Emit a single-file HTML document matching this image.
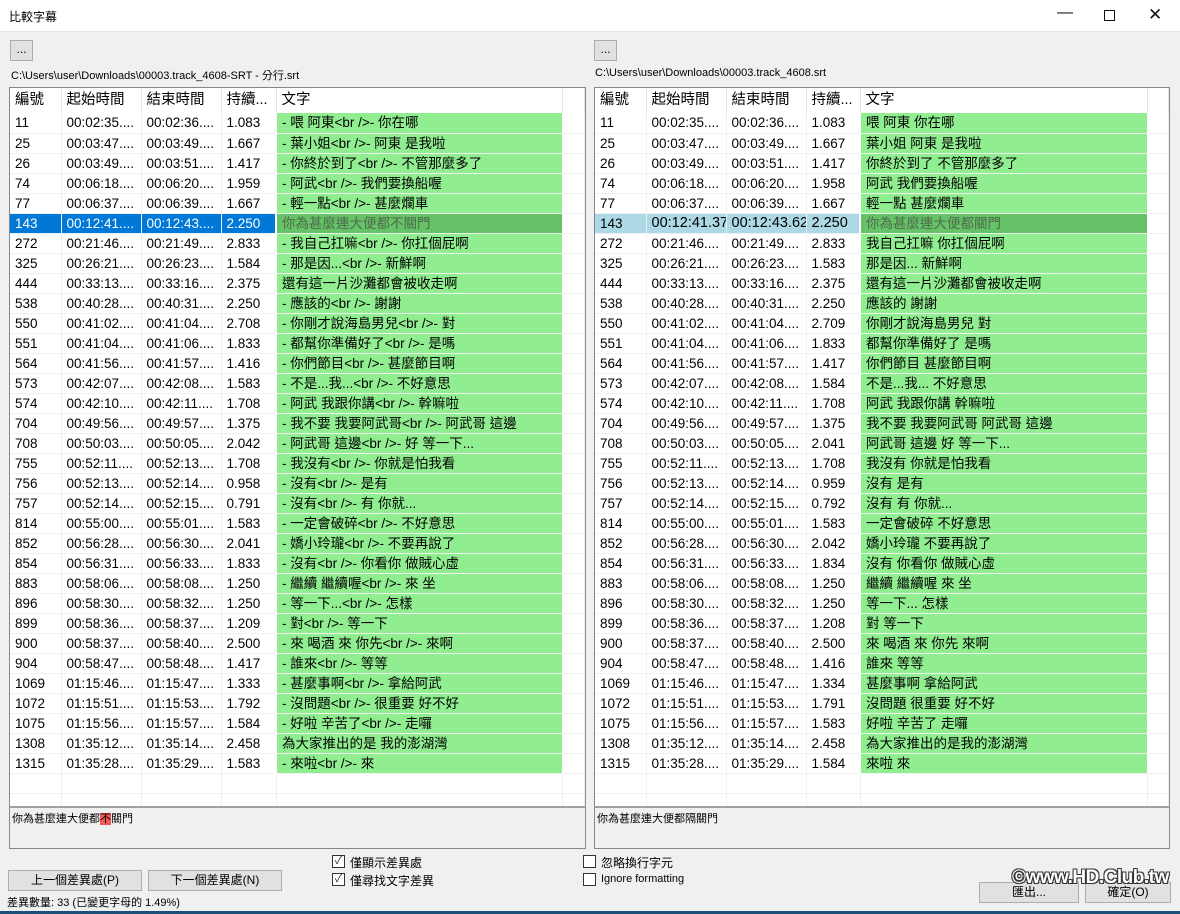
<!DOCTYPE html>
<html><head><meta charset="utf-8">
<style>
*{box-sizing:border-box;margin:0;padding:0}
body{width:1180px;height:914px;background:#f0f0f0;font-family:"Liberation Sans","Noto Sans CJK TC",sans-serif;font-size:12px;color:#000;position:relative;overflow:hidden}
.title{position:absolute;left:0;top:0;width:1180px;height:32px;background:#fff;border-bottom:1px solid #e5e5e5}
.title span{position:absolute;left:9px;top:8px;font-size:12px}
.wb{position:absolute;top:8px;font-size:16px;color:#111}
.abs{position:absolute}
.btn{position:absolute;background:#e1e1e1;border:1px solid #adadad;text-align:center;font-size:12px}
.grid{position:absolute;background:#fff;border:1px solid #828790;overflow:hidden}
table{border-collapse:collapse;table-layout:fixed;font-size:13.5px}
td,th{height:20px;padding:0 0 0 5px;white-space:nowrap;overflow:hidden;text-overflow:clip;border-right:1px solid #f0f0f0;border-bottom:1px solid #f0f0f0;font-weight:normal;text-align:left;line-height:19px}
th{height:25px;font-size:14.5px;border-right:1px solid #e5e5e5;border-bottom:none}
td.g{background:#90ee90;border-right:1px solid #fff;border-left:2px solid #fff}
tr.s td{background:#0078d7;color:#fff}
tr.s td.g{background:#66c266;color:#4d6a4d}
tr.r td{background:#add8e6;color:#000}
tr.r td.g{background:#66c266;color:#4d6a4d}
.panel{position:absolute;background:#f0f0f0;border:1px solid #828790;border-top:2px solid #a0a0a0;font-size:11px;padding:2px 2px}
.cb{position:absolute;width:13px;height:13px;border:1px solid #333;background:#fff;font-size:11px;line-height:11px;text-align:center;color:#333}
.lab{position:absolute;font-size:12px}
</style></head><body>
<div class="title"><span>比較字幕</span>
<div class="wb" style="left:1057px;top:4px">&#8212;</div>
<div class="abs" style="left:1104px;top:10px;width:11px;height:11px;border:1px solid #111"></div>
<div class="wb" style="left:1148px;top:5px;font-size:17px">&#10005;</div>
</div>

<div class="btn" style="left:10px;top:40px;width:23px;height:21px;line-height:17px">...</div>
<div class="lab" style="left:11px;top:67px;font-size:11px">C:\Users\user\Downloads\00003.track_4608-SRT - 分行.srt</div>
<div class="btn" style="left:594px;top:40px;width:23px;height:21px;line-height:17px">...</div>
<div class="lab" style="left:595px;top:67px;font-size:11px">C:\Users\user\Downloads\00003.track_4608.srt</div>

<div class="grid" style="left:9px;top:87px;width:577px;height:720px">
<table style="width:575px"><colgroup><col style="width:51px"><col style="width:80px"><col style="width:80px"><col style="width:55px"><col style="width:286px"><col></colgroup>
<tr><th>編號</th><th>起始時間</th><th>結束時間</th><th>持續...</th><th>文字</th><th></th></tr>
<tr><td>11</td><td>00:02:35....</td><td>00:02:36....</td><td>1.083</td><td class="g">- 喂 阿東&lt;br /&gt;- 你在哪</td><td></td></tr>
<tr><td>25</td><td>00:03:47....</td><td>00:03:49....</td><td>1.667</td><td class="g">- 葉小姐&lt;br /&gt;- 阿東 是我啦</td><td></td></tr>
<tr><td>26</td><td>00:03:49....</td><td>00:03:51....</td><td>1.417</td><td class="g">- 你終於到了&lt;br /&gt;- 不管那麼多了</td><td></td></tr>
<tr><td>74</td><td>00:06:18....</td><td>00:06:20....</td><td>1.959</td><td class="g">- 阿武&lt;br /&gt;- 我們要換船喔</td><td></td></tr>
<tr><td>77</td><td>00:06:37....</td><td>00:06:39....</td><td>1.667</td><td class="g">- 輕一點&lt;br /&gt;- 甚麼爛車</td><td></td></tr>
<tr class="s"><td>143</td><td>00:12:41....</td><td>00:12:43....</td><td>2.250</td><td class="g">你為甚麼連大便都不關門</td><td style="background:#fff"></td></tr>
<tr><td>272</td><td>00:21:46....</td><td>00:21:49....</td><td>2.833</td><td class="g">- 我自己扛嘛&lt;br /&gt;- 你扛個屁啊</td><td></td></tr>
<tr><td>325</td><td>00:26:21....</td><td>00:26:23....</td><td>1.584</td><td class="g">- 那是因...&lt;br /&gt;- 新鮮啊</td><td></td></tr>
<tr><td>444</td><td>00:33:13....</td><td>00:33:16....</td><td>2.375</td><td class="g">還有這一片沙灘都會被收走啊</td><td></td></tr>
<tr><td>538</td><td>00:40:28....</td><td>00:40:31....</td><td>2.250</td><td class="g">- 應該的&lt;br /&gt;- 謝謝</td><td></td></tr>
<tr><td>550</td><td>00:41:02....</td><td>00:41:04....</td><td>2.708</td><td class="g">- 你剛才說海島男兒&lt;br /&gt;- 對</td><td></td></tr>
<tr><td>551</td><td>00:41:04....</td><td>00:41:06....</td><td>1.833</td><td class="g">- 都幫你準備好了&lt;br /&gt;- 是嗎</td><td></td></tr>
<tr><td>564</td><td>00:41:56....</td><td>00:41:57....</td><td>1.416</td><td class="g">- 你們節目&lt;br /&gt;- 甚麼節目啊</td><td></td></tr>
<tr><td>573</td><td>00:42:07....</td><td>00:42:08....</td><td>1.583</td><td class="g">- 不是...我...&lt;br /&gt;- 不好意思</td><td></td></tr>
<tr><td>574</td><td>00:42:10....</td><td>00:42:11....</td><td>1.708</td><td class="g">- 阿武 我跟你講&lt;br /&gt;- 幹嘛啦</td><td></td></tr>
<tr><td>704</td><td>00:49:56....</td><td>00:49:57....</td><td>1.375</td><td class="g">- 我不要 我要阿武哥&lt;br /&gt;- 阿武哥 這邊</td><td></td></tr>
<tr><td>708</td><td>00:50:03....</td><td>00:50:05....</td><td>2.042</td><td class="g">- 阿武哥 這邊&lt;br /&gt;- 好 等一下...</td><td></td></tr>
<tr><td>755</td><td>00:52:11....</td><td>00:52:13....</td><td>1.708</td><td class="g">- 我沒有&lt;br /&gt;- 你就是怕我看</td><td></td></tr>
<tr><td>756</td><td>00:52:13....</td><td>00:52:14....</td><td>0.958</td><td class="g">- 沒有&lt;br /&gt;- 是有</td><td></td></tr>
<tr><td>757</td><td>00:52:14....</td><td>00:52:15....</td><td>0.791</td><td class="g">- 沒有&lt;br /&gt;- 有 你就...</td><td></td></tr>
<tr><td>814</td><td>00:55:00....</td><td>00:55:01....</td><td>1.583</td><td class="g">- 一定會破碎&lt;br /&gt;- 不好意思</td><td></td></tr>
<tr><td>852</td><td>00:56:28....</td><td>00:56:30....</td><td>2.041</td><td class="g">- 嬌小玲瓏&lt;br /&gt;- 不要再說了</td><td></td></tr>
<tr><td>854</td><td>00:56:31....</td><td>00:56:33....</td><td>1.833</td><td class="g">- 沒有&lt;br /&gt;- 你看你 做賊心虛</td><td></td></tr>
<tr><td>883</td><td>00:58:06....</td><td>00:58:08....</td><td>1.250</td><td class="g">- 繼續 繼續喔&lt;br /&gt;- 來 坐</td><td></td></tr>
<tr><td>896</td><td>00:58:30....</td><td>00:58:32....</td><td>1.250</td><td class="g">- 等一下...&lt;br /&gt;- 怎樣</td><td></td></tr>
<tr><td>899</td><td>00:58:36....</td><td>00:58:37....</td><td>1.209</td><td class="g">- 對&lt;br /&gt;- 等一下</td><td></td></tr>
<tr><td>900</td><td>00:58:37....</td><td>00:58:40....</td><td>2.500</td><td class="g">- 來 喝酒 來 你先&lt;br /&gt;- 來啊</td><td></td></tr>
<tr><td>904</td><td>00:58:47....</td><td>00:58:48....</td><td>1.417</td><td class="g">- 誰來&lt;br /&gt;- 等等</td><td></td></tr>
<tr><td>1069</td><td>01:15:46....</td><td>01:15:47....</td><td>1.333</td><td class="g">- 甚麼事啊&lt;br /&gt;- 拿給阿武</td><td></td></tr>
<tr><td>1072</td><td>01:15:51....</td><td>01:15:53....</td><td>1.792</td><td class="g">- 沒問題&lt;br /&gt;- 很重要 好不好</td><td></td></tr>
<tr><td>1075</td><td>01:15:56....</td><td>01:15:57....</td><td>1.584</td><td class="g">- 好啦 辛苦了&lt;br /&gt;- 走囉</td><td></td></tr>
<tr><td>1308</td><td>01:35:12....</td><td>01:35:14....</td><td>2.458</td><td class="g">為大家推出的是 我的澎湖灣</td><td></td></tr>
<tr><td>1315</td><td>01:35:28....</td><td>01:35:29....</td><td>1.583</td><td class="g">- 來啦&lt;br /&gt;- 來</td><td></td></tr>
<tr><td></td><td></td><td></td><td></td><td></td><td></td></tr>
<tr><td></td><td></td><td></td><td></td><td></td><td></td></tr>
</table></div>

<div class="grid" style="left:594px;top:87px;width:576px;height:720px">
<table style="width:574px"><colgroup><col style="width:51px"><col style="width:80px"><col style="width:80px"><col style="width:54px"><col style="width:287px"><col></colgroup>
<tr><th>編號</th><th>起始時間</th><th>結束時間</th><th>持續...</th><th>文字</th><th></th></tr>
<tr><td>11</td><td>00:02:35....</td><td>00:02:36....</td><td>1.083</td><td class="g">喂 阿東 你在哪</td><td></td></tr>
<tr><td>25</td><td>00:03:47....</td><td>00:03:49....</td><td>1.667</td><td class="g">葉小姐 阿東 是我啦</td><td></td></tr>
<tr><td>26</td><td>00:03:49....</td><td>00:03:51....</td><td>1.417</td><td class="g">你終於到了 不管那麼多了</td><td></td></tr>
<tr><td>74</td><td>00:06:18....</td><td>00:06:20....</td><td>1.958</td><td class="g">阿武 我們要換船喔</td><td></td></tr>
<tr><td>77</td><td>00:06:37....</td><td>00:06:39....</td><td>1.667</td><td class="g">輕一點 甚麼爛車</td><td></td></tr>
<tr class="r"><td>143</td><td style="font-size:14.5px">00:12:41.37</td><td style="font-size:14.5px">00:12:43.62</td><td style="font-size:14.5px">2.250</td><td class="g">你為甚麼連大便都關門</td><td style="background:#fff"></td></tr>
<tr><td>272</td><td>00:21:46....</td><td>00:21:49....</td><td>2.833</td><td class="g">我自己扛嘛 你扛個屁啊</td><td></td></tr>
<tr><td>325</td><td>00:26:21....</td><td>00:26:23....</td><td>1.583</td><td class="g">那是因... 新鮮啊</td><td></td></tr>
<tr><td>444</td><td>00:33:13....</td><td>00:33:16....</td><td>2.375</td><td class="g">還有這一片沙灘都會被收走啊</td><td></td></tr>
<tr><td>538</td><td>00:40:28....</td><td>00:40:31....</td><td>2.250</td><td class="g">應該的 謝謝</td><td></td></tr>
<tr><td>550</td><td>00:41:02....</td><td>00:41:04....</td><td>2.709</td><td class="g">你剛才說海島男兒 對</td><td></td></tr>
<tr><td>551</td><td>00:41:04....</td><td>00:41:06....</td><td>1.833</td><td class="g">都幫你準備好了 是嗎</td><td></td></tr>
<tr><td>564</td><td>00:41:56....</td><td>00:41:57....</td><td>1.417</td><td class="g">你們節目 甚麼節目啊</td><td></td></tr>
<tr><td>573</td><td>00:42:07....</td><td>00:42:08....</td><td>1.584</td><td class="g">不是...我... 不好意思</td><td></td></tr>
<tr><td>574</td><td>00:42:10....</td><td>00:42:11....</td><td>1.708</td><td class="g">阿武 我跟你講 幹嘛啦</td><td></td></tr>
<tr><td>704</td><td>00:49:56....</td><td>00:49:57....</td><td>1.375</td><td class="g">我不要 我要阿武哥 阿武哥 這邊</td><td></td></tr>
<tr><td>708</td><td>00:50:03....</td><td>00:50:05....</td><td>2.041</td><td class="g">阿武哥 這邊 好 等一下...</td><td></td></tr>
<tr><td>755</td><td>00:52:11....</td><td>00:52:13....</td><td>1.708</td><td class="g">我沒有 你就是怕我看</td><td></td></tr>
<tr><td>756</td><td>00:52:13....</td><td>00:52:14....</td><td>0.959</td><td class="g">沒有 是有</td><td></td></tr>
<tr><td>757</td><td>00:52:14....</td><td>00:52:15....</td><td>0.792</td><td class="g">沒有 有 你就...</td><td></td></tr>
<tr><td>814</td><td>00:55:00....</td><td>00:55:01....</td><td>1.583</td><td class="g">一定會破碎 不好意思</td><td></td></tr>
<tr><td>852</td><td>00:56:28....</td><td>00:56:30....</td><td>2.042</td><td class="g">嬌小玲瓏 不要再說了</td><td></td></tr>
<tr><td>854</td><td>00:56:31....</td><td>00:56:33....</td><td>1.834</td><td class="g">沒有 你看你 做賊心虛</td><td></td></tr>
<tr><td>883</td><td>00:58:06....</td><td>00:58:08....</td><td>1.250</td><td class="g">繼續 繼續喔 來 坐</td><td></td></tr>
<tr><td>896</td><td>00:58:30....</td><td>00:58:32....</td><td>1.250</td><td class="g">等一下... 怎樣</td><td></td></tr>
<tr><td>899</td><td>00:58:36....</td><td>00:58:37....</td><td>1.208</td><td class="g">對 等一下</td><td></td></tr>
<tr><td>900</td><td>00:58:37....</td><td>00:58:40....</td><td>2.500</td><td class="g">來 喝酒 來 你先 來啊</td><td></td></tr>
<tr><td>904</td><td>00:58:47....</td><td>00:58:48....</td><td>1.416</td><td class="g">誰來 等等</td><td></td></tr>
<tr><td>1069</td><td>01:15:46....</td><td>01:15:47....</td><td>1.334</td><td class="g">甚麼事啊 拿給阿武</td><td></td></tr>
<tr><td>1072</td><td>01:15:51....</td><td>01:15:53....</td><td>1.791</td><td class="g">沒問題 很重要 好不好</td><td></td></tr>
<tr><td>1075</td><td>01:15:56....</td><td>01:15:57....</td><td>1.583</td><td class="g">好啦 辛苦了 走囉</td><td></td></tr>
<tr><td>1308</td><td>01:35:12....</td><td>01:35:14....</td><td>2.458</td><td class="g">為大家推出的是我的澎湖灣</td><td></td></tr>
<tr><td>1315</td><td>01:35:28....</td><td>01:35:29....</td><td>1.584</td><td class="g">來啦 來</td><td></td></tr>
<tr><td></td><td></td><td></td><td></td><td></td><td></td></tr>
<tr><td></td><td></td><td></td><td></td><td></td><td></td></tr>
</table></div>

<div class="panel" style="left:9px;top:806px;width:577px;height:43px">你為甚麼連大便都<span style="background:#f25a5a">不</span>關門</div>
<div class="panel" style="left:594px;top:806px;width:576px;height:43px">你為甚麼連大便都隔關門</div>

<div class="cb" style="left:332px;top:855px">&#10003;</div><div class="lab" style="left:350px;top:854px">僅顯示差異處</div>
<div class="cb" style="left:332px;top:873px">&#10003;</div><div class="lab" style="left:350px;top:872px">僅尋找文字差異</div>
<div class="cb" style="left:583px;top:855px"></div><div class="lab" style="left:601px;top:854px">忽略換行字元</div>
<div class="cb" style="left:583px;top:873px"></div><div class="lab" style="left:601px;top:873px;font-size:11px">Ignore formatting</div>

<div class="btn" style="left:8px;top:870px;width:134px;height:21px;line-height:19px">上一個差異處(P)</div>
<div class="btn" style="left:148px;top:870px;width:134px;height:21px;line-height:19px">下一個差異處(N)</div>
<div class="lab" style="left:7px;top:894px;font-size:11px">差異數量: 33 (已變更字母的 1.49%)</div>

<div class="btn" style="left:979px;top:882px;width:100px;height:21px;line-height:19px">匯出...</div>
<div class="btn" style="left:1085px;top:882px;width:86px;height:21px;line-height:19px">確定(O)</div>
<div class="lab" style="left:1012px;top:867px;font-size:19px;font-weight:bold;color:#fff;letter-spacing:-0.5px;text-shadow:-1px -1px 0 #333,1px -1px 0 #333,-1px 1px 0 #333,1px 1px 0 #333">©www.HD.Club.tw</div>
<div class="abs" style="left:0;top:911px;width:1180px;height:3px;background:#1c4e7a"></div>
</body></html>
